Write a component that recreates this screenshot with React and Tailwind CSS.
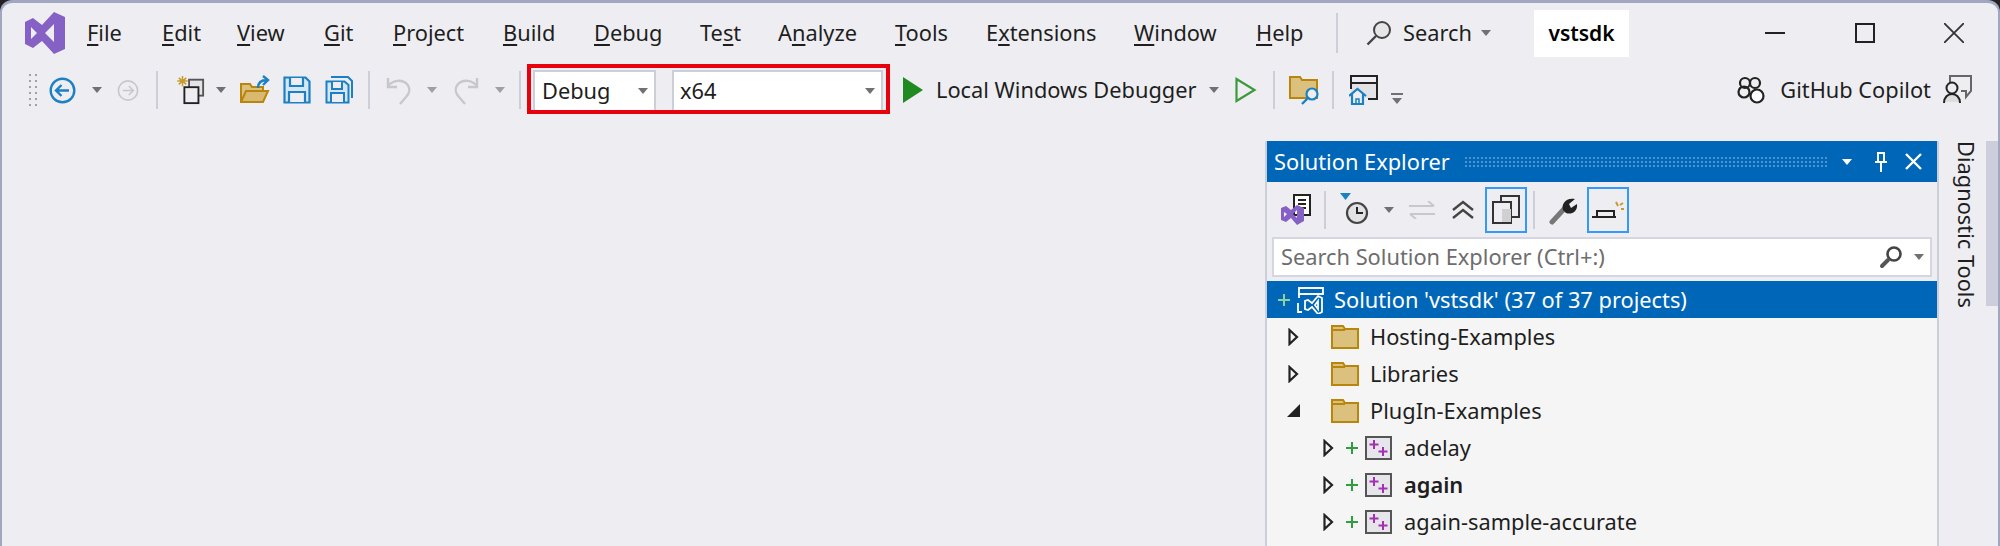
import React from 'react';

const FONT = "font-['Noto_Sans',sans-serif]";

const menus = [
  { pre: '', key: 'F', post: 'ile', w: 'w-[75px]' },
  { pre: '', key: 'E', post: 'dit', w: 'w-[75px]' },
  { pre: '', key: 'V', post: 'iew', w: 'w-[87px]' },
  { pre: '', key: 'G', post: 'it', w: 'w-[69px]' },
  { pre: '', key: 'P', post: 'roject', w: 'w-[110px]' },
  { pre: '', key: 'B', post: 'uild', w: 'w-[91px]' },
  { pre: '', key: 'D', post: 'ebug', w: 'w-[106px]' },
  { pre: 'Te', key: 's', post: 't', w: 'w-[78px]' },
  { pre: 'A', key: 'n', post: 'alyze', w: 'w-[117px]' },
  { pre: '', key: 'T', post: 'ools', w: 'w-[91px]' },
  { pre: 'E', key: 'x', post: 'tensions', w: 'w-[148px]' },
  { pre: '', key: 'W', post: 'indow', w: 'w-[122px]' },
  { pre: '', key: 'H', post: 'elp', w: 'w-[81px]' },
];

function Caret({ color = '#717171' }) {
  return (
    <svg width="10" height="6" viewBox="0 0 10 6">
      <path d="M0 0h10L5 6z" fill={color} />
    </svg>
  );
}

function Sep({ h = 'h-[38px]' }) {
  return <div className={`w-[2px] ${h} bg-[#ccced8]`} />;
}

function Slot({ w, children }) {
  return <div className={`${w} shrink-0 flex items-center justify-center`}>{children}</div>;
}

function VsLogo() {
  return (
    <svg width="40" height="42" viewBox="0 0 40 42">
      <path
        fillRule="evenodd"
        d="M29 0l11 5v32l-11 5-12-13-9 7-8-4V10l8-4 9 7zM6 15v12l6-6zM29 12l-9 9 9 9z"
        fill="#8661c5"
      />
    </svg>
  );
}

function BackIcon() {
  return (
    <svg width="27" height="27" viewBox="0 0 27 27" fill="none" stroke="#1b80c4" strokeWidth="2.4">
      <circle cx="13.5" cy="13.5" r="11.8" />
      <path d="M20 13.5H7.5M12.5 8l-5.5 5.5 5.5 5.5" />
    </svg>
  );
}

function ForwardIcon() {
  return (
    <svg width="27" height="27" viewBox="0 0 27 27" fill="none" stroke="#c8c8cc" strokeWidth="2">
      <circle cx="13.5" cy="13.5" r="11.8" />
      <path d="M7 13.5h12.5M14.5 8l5.5 5.5-5.5 5.5" />
    </svg>
  );
}

function NewProjectIcon() {
  return (
    <svg width="32" height="32" viewBox="0 0 32 32" fill="none">
      <path d="M8 1v11M2.500 6.500h11M4 3l8 7M12 3l-8 7" stroke="#c79a2b" strokeWidth="1.600" />
      <rect x="15" y="5" width="15" height="17" fill="#e4e4e8" stroke="#555" strokeWidth="2" />
      <rect x="10" y="13" width="15" height="17" fill="#eeeef2" stroke="#222" strokeWidth="2" />
    </svg>
  );
}

function OpenIcon() {
  return (
    <svg width="30" height="30" viewBox="0 0 30 30" fill="none">
      <path d="M1 9h9l2 3h11v14H1z" fill="#dcc07e" stroke="#b8860b" strokeWidth="2" />
      <path d="M1 27l5-11h22l-5 11z" fill="#d9b96f" stroke="#b8860b" strokeWidth="2" />
      <path d="M18 13c0-6 4-8 9-8M23 1l5 4-5 5" stroke="#1b80c4" strokeWidth="2.400" />
    </svg>
  );
}

function SaveIcon() {
  return (
    <svg width="28" height="28" viewBox="0 0 28 28" fill="none" stroke="#1b80c4" strokeWidth="2.200">
      <path d="M1.500 1.500h21l4 4v21h-25z" fill="#d6e6f3" />
      <path d="M7 2v8h13V2M6 26V16h16v10" fill="#eeeef2" />
    </svg>
  );
}

function SaveAllIcon() {
  return (
    <svg width="28" height="28" viewBox="0 0 28 28" fill="none" stroke="#1b80c4" strokeWidth="2">
      <path d="M6 1h17l4 4v17" />
      <path d="M1.500 5.500h18l4 3.500v17.500h-22z" fill="#d6e6f3" />
      <path d="M7 6v7h10V6M6 26v-9h13v9" fill="#eeeef2" />
    </svg>
  );
}

function UndoIcon({ flip }) {
  return (
    <svg width="26" height="30" viewBox="0 0 26 30" fill="none" stroke="#c8c8cc" strokeWidth="2.400" className={flip ? '-scale-x-100' : ''}>
      <path d="M2 3v9h9" />
      <path d="M2 11C7 5 16 4 21 9c4 5 2 10-1 13l-6 7" />
    </svg>
  );
}

function PlayFilled() {
  return (
    <svg width="20" height="26" viewBox="0 0 20 26">
      <path d="M0 0l20 13L0 26z" fill="#1f8a1f" />
    </svg>
  );
}

function PlayOutline() {
  return (
    <svg width="22" height="26" viewBox="0 0 22 26" fill="none" stroke="#3c9a3c" strokeWidth="2.200">
      <path d="M1.500 2l18 11-18 11z" />
    </svg>
  );
}

function FolderSearch() {
  return (
    <svg width="32" height="30" viewBox="0 0 32 30" fill="none">
      <path d="M1 2h10l2 3h15v18H1z" fill="#dcc07e" stroke="#b8860b" strokeWidth="2" />
      <circle cx="23" cy="19" r="5.500" fill="#eeeef2" stroke="#1b80c4" strokeWidth="2.200" />
      <path d="M19 23l-6 6" stroke="#1b80c4" strokeWidth="2.400" />
    </svg>
  );
}

function HomeWindow() {
  return (
    <svg width="30" height="32" viewBox="0 0 30 32" fill="none">
      <path d="M2 9h26v15H2z" fill="#e2e2e6" />
      <path d="M2 15V2h26v23h-9M2 9h26" stroke="#222" strokeWidth="2" />
      <path d="M3 21v10h11V21l-5.500-5z" fill="#eeeef2" />
      <path d="M0 22l8.500-7 8.500 7M3 20v10h11V20" stroke="#1b80c4" strokeWidth="2.200" />
      <path d="M7 30v-5h3v5" stroke="#1b80c4" strokeWidth="1.500" />
    </svg>
  );
}

function OverflowCaret() {
  return (
    <div className="flex flex-col items-center gap-[3px] mt-[16px]">
      <div className="w-[12px] h-[2px] bg-[#717171]" />
      <Caret />
    </div>
  );
}

function SearchGlass() {
  return (
    <svg width="26" height="26" viewBox="0 0 26 26" fill="none">
      <circle cx="16" cy="10" r="8" fill="#e6e6e8" stroke="#444" strokeWidth="2" />
      <path d="M10 16L1.500 24.500" stroke="#444" strokeWidth="2.400" />
    </svg>
  );
}

function CopilotIcon() {
  return (
    <svg width="30" height="28" viewBox="0 0 30 28" fill="none" stroke="#222" strokeWidth="2.200">
      <circle cx="8" cy="7" r="5" />
      <circle cx="18" cy="7" r="5" />
      <circle cx="7" cy="16" r="5.500" />
      <circle cx="20" cy="20" r="6.500" fill="#fff" />
    </svg>
  );
}

function FeedbackIcon() {
  return (
    <svg width="30" height="30" viewBox="0 0 30 30" fill="none">
      <path d="M8 8V1h21v15l-5 6v-6h-5" stroke="#666" strokeWidth="2" />
      <path d="M1 27c1-7 5-9 9-9s8 2 9 9z" fill="#ddd" />
      <circle cx="10" cy="13" r="5.500" fill="#eeeef2" stroke="#222" strokeWidth="2" />
      <path d="M2 28c0-6 4-9 8-9s8 3 8 9" stroke="#222" strokeWidth="2" />
    </svg>
  );
}

function ChildFolder() {
  return (
    <svg width="28" height="24" viewBox="0 0 28 24">
      <path d="M1 1h11l2 3h13v19H1z" fill="#dcc07e" stroke="#b8860b" strokeWidth="2" />
      <path d="M1 5h13" stroke="#b8860b" strokeWidth="2" />
    </svg>
  );
}

function ProjectIcon() {
  return (
    <svg width="27" height="24" viewBox="0 0 27 24" fill="none">
      <rect x="1" y="1" width="25" height="22" fill="#e6e6ea" stroke="#555" strokeWidth="2" />
      <path d="M9 4v9M4.500 8.500h9M18 11v9M13.500 15.500h9" stroke="#a42fb5" strokeWidth="2" />
    </svg>
  );
}

function Expander({ open }) {
  if (open) {
    return (
      <svg width="13" height="13" viewBox="0 0 13 13">
        <path d="M13 0v13H0z" fill="#222" />
      </svg>
    );
  }
  return (
    <svg width="11" height="18" viewBox="0 0 11 18" fill="none" stroke="#222" strokeWidth="2.200">
      <path d="M1.500 2l7.500 7-7.500 7z" />
    </svg>
  );
}

function GreenPlus({ color = '#2e9e3e' }) {
  return (
    <svg width="12" height="12" viewBox="0 0 12 12" stroke={color} strokeWidth="2">
      <path d="M6 0v12M0 6h12" />
    </svg>
  );
}

function FolderRow({ label, open }) {
  return (
    <div className="h-[37px] flex items-center text-[#1e1e1e]">
      <div className="w-[24px] ml-[14px] flex justify-center"><Expander open={open} /></div>
      <div className="ml-[26px] mr-[11px] flex"><ChildFolder /></div>
      <span>{label}</span>
    </div>
  );
}

function ProjectRow({ label, bold }) {
  return (
    <div className="h-[37px] flex items-center text-[#1e1e1e]">
      <div className="w-[24px] ml-[49px] flex justify-center"><Expander /></div>
      <div className="ml-[6px] mr-[7px] flex"><GreenPlus /></div>
      <div className="mr-[12px] flex"><ProjectIcon /></div>
      <span className={bold ? 'font-semibold' : ''}>{label}</span>
    </div>
  );
}

export default function App() {
  return (
    <div className={`w-[2000px] h-[546px] overflow-hidden bg-[#222] ${FONT} text-[21.8px] leading-none`}>
      <div className="h-full rounded-t-[12px] border-t-[3px] border-x-[2px] border-[#a3a6c0] bg-[#eeeef2] flex flex-col">
        {/* menu bar */}
        <div className="h-[60px] shrink-0 flex items-center text-[#1e1e1e]">
          <div className="ml-[23px] w-[62px] flex mt-[-1px]"><VsLogo /></div>
          {menus.map((m) => (
            <div key={m.post} className={`${m.w} shrink-0`}>
              {m.pre}<span className="underline underline-offset-[3px]">{m.key}</span>{m.post}
            </div>
          ))}
          <div className="ml-[-1px]"><Sep h="h-[40px]" /></div>
          <div className="ml-[28px] flex"><SearchGlass /></div>
          <span className="ml-[11px] w-[69px]">Search</span>
          <div className="ml-[9px] flex"><Caret /></div>
          <div className="ml-[43px] w-[95px] h-[47px] bg-white flex items-center justify-center font-semibold text-[21px] text-black">vstsdk</div>
          <div className="flex-1" />
          <div className="w-[20px] h-[2px] bg-[#222]" />
          <div className="ml-[70px] w-[20px] h-[20px] border-2 border-[#222]" />
          <svg className="ml-[69px] mr-[34px]" width="20" height="20" viewBox="0 0 20 20" stroke="#333" strokeWidth="1.800">
            <path d="M0 0l20 20M20 0L0 20" />
          </svg>
        </div>

        {/* toolbar */}
        <div className="h-[54px] shrink-0 flex items-center text-[#1e1e1e]">
          <div className="ml-[25px] w-[12px] h-[36px] bg-[radial-gradient(#a0a0a8_1px,transparent_1.2px)] bg-[length:6px_6px]" />
          <div className="w-[9px]" />
          <Slot w="w-[28px]"><BackIcon /></Slot>
          <Slot w="w-[41px]"><Caret /></Slot>
          <Slot w="w-[22px]"><ForwardIcon /></Slot>
          <Slot w="w-[36px]"><Sep /></Slot>
          <Slot w="w-[30px]"><NewProjectIcon /></Slot>
          <Slot w="w-[32px]"><Caret /></Slot>
          <Slot w="w-[36px]"><OpenIcon /></Slot>
          <Slot w="w-[48px]"><SaveIcon /></Slot>
          <Slot w="w-[36px]"><SaveAllIcon /></Slot>
          <Slot w="w-[24px]"><Sep /></Slot>
          <Slot w="w-[36px]"><UndoIcon /></Slot>
          <Slot w="w-[30px]"><Caret color="#a0a0a4" /></Slot>
          <Slot w="w-[38px]"><UndoIcon flip /></Slot>
          <Slot w="w-[30px]"><Caret color="#a0a0a4" /></Slot>
          <Slot w="w-[10px]"><Sep /></Slot>

          {/* highlighted configuration combos */}
          <div className="ml-[2px] mb-[2px] w-[363px] h-[50px] border-[4px] border-[#e8000d] flex items-stretch pl-[2px] pr-[3px] pt-[2px]">
            <div className="w-[123px] bg-white border-x-2 border-t-2 border-[#ccced8] flex items-center pl-[7px] pr-[6px] justify-between">
              <span>Debug</span>
              <Caret />
            </div>
            <div className="ml-[16px] flex-1 bg-white border-x-2 border-t-2 border-[#ccced8] flex items-center pl-[6px] pr-[6px] justify-between">
              <span>x64</span>
              <Caret />
            </div>
          </div>

          <Slot w="w-[46px]"><PlayFilled /></Slot>
          <div className="w-[262px] shrink-0 whitespace-nowrap">Local Windows Debugger</div>
          <Slot w="w-[32px]"><Caret /></Slot>
          <Slot w="w-[32px]"><PlayOutline /></Slot>
          <Slot w="w-[24px]"><Sep /></Slot>
          <Slot w="w-[38px]"><FolderSearch /></Slot>
          <Slot w="w-[18px]"><Sep /></Slot>
          <Slot w="w-[44px]"><HomeWindow /></Slot>
          <Slot w="w-[22px]"><OverflowCaret /></Slot>
          <div className="flex-1" />
          <div className="flex"><CopilotIcon /></div>
          <span className="ml-[13px] whitespace-nowrap">GitHub Copilot</span>
          <div className="ml-[11px] mr-[26px] flex"><FeedbackIcon /></div>
        </div>

        {/* body */}
        <div className="flex-1 min-h-0 flex">
          <div className="flex-1" />

          {/* Solution Explorer */}
          <div className="mt-[24px] w-[674px] shrink-0 border-x-2 border-[#ccced8] bg-[#eeeef2] flex flex-col">
            <div className="h-[41px] shrink-0 bg-[#0066b8] text-white flex items-center pl-[7px]">
              <span>Solution Explorer</span>
              <div className="ml-[14px] flex-1 h-[12px] bg-[radial-gradient(#4d93cf_1px,transparent_1.2px)] bg-[length:4px_4px]" />
              <div className="ml-[14px] flex"><Caret color="#fff" /></div>
              <svg className="ml-[22px]" width="14" height="22" viewBox="0 0 14 22" fill="none" stroke="#fff" strokeWidth="2">
                <path d="M4 2h6v9H4zM1 11h12M7 11v10" />
              </svg>
              <svg className="ml-[17px] mr-[15px]" width="17" height="17" viewBox="0 0 17 17" stroke="#fff" strokeWidth="2.400">
                <path d="M1 1l15 15M16 1L1 16" />
              </svg>
            </div>

            <div className="h-[55px] shrink-0 flex items-center">
              <div className="ml-[13px] flex">
                <svg width="32" height="32" viewBox="0 0 32 32" fill="none">
                  <path d="M14 1h16v20H14z" fill="#fff" stroke="#222" strokeWidth="2" />
                  <path d="M18 6h8M18 10h8M18 14h8" stroke="#222" strokeWidth="2" />
                  <path fillRule="evenodd" d="M17 11l7 3v13l-7 4-6-7-5 4-5-2V14l5-2 5 4zM4 18v5l3-3zM17 16l-4 4 4 4z" fill="#8661c5" />
                </svg>
              </div>
              <div className="ml-[12px]"><Sep h="h-[38px]" /></div>
              <div className="ml-[14px] flex">
                <svg width="30" height="34" viewBox="0 0 30 34" fill="none">
                  <path d="M0 0h11L5.500 7z" fill="#1b80c4" />
                  <circle cx="17" cy="20" r="10" fill="#e2e2e6" stroke="#444" strokeWidth="2.200" />
                  <path d="M17 14v6h6" stroke="#222" strokeWidth="2" />
                </svg>
              </div>
              <div className="ml-[14px] flex"><Caret /></div>
              <div className="ml-[15px] flex">
                <svg width="26" height="18" viewBox="0 0 26 18" fill="none" stroke="#c8c8cc" strokeWidth="2">
                  <path d="M0 5h25M19 0l6 5M26 13H1M7 18l-6-5" />
                </svg>
              </div>
              <div className="ml-[17px] flex">
                <svg width="22" height="20" viewBox="0 0 22 20" fill="none" stroke="#444" strokeWidth="2.400">
                  <path d="M1 10l10-8 10 8M1 18l10-8 10 8" />
                </svg>
              </div>
              <div className="ml-[11px] w-[42px] h-[46px] border-2 border-[#3399ff] flex items-center justify-center">
                <svg width="28" height="30" viewBox="0 0 28 30" fill="none" stroke="#333" strokeWidth="2">
                  <rect x="9" y="1" width="18" height="21" fill="#eeeef2" />
                  <rect x="1" y="7" width="18" height="21" fill="#eeeef2" />
                  <rect x="10" y="14" width="9" height="13" fill="#d0d0d4" stroke="none" />
                </svg>
              </div>
              <div className="ml-[6px]"><Sep h="h-[38px]" /></div>
              <div className="ml-[14px] flex">
                <svg width="30" height="30" viewBox="0 0 30 30" fill="none">
                  <path d="M3 27L16 13" stroke="#777" strokeWidth="5" strokeLinecap="round" />
                  <path d="M14 15c-2-6 3-13 12-11l-6 5 2 4 6-4c1 8-6 11-11 9z" fill="#222" />
                </svg>
              </div>
              <div className="ml-[8px] w-[42px] h-[46px] border-2 border-[#3399ff] flex items-center justify-center">
                <svg width="32" height="22" viewBox="0 0 32 22" fill="none">
                  <path d="M0 18h24M5 18v-6h17v6" stroke="#222" strokeWidth="2" />
                  <path d="M24 3l2 4M29 10h3M28 6l3-2" stroke="#c79a2b" strokeWidth="2" />
                </svg>
              </div>
            </div>

            <div className="mx-[5px] h-[40px] shrink-0 border-2 border-[#d6d6e2] bg-white flex items-center pl-[7px] text-[#6d6d6d]">
              <span className="whitespace-nowrap">Search Solution Explorer (Ctrl+:)</span>
              <div className="flex-1" />
              <svg width="24" height="24" viewBox="0 0 24 24" fill="none">
                <circle cx="15" cy="9" r="6.500" stroke="#444" strokeWidth="2.600" fill="#fff" />
                <path d="M9 15l-6 6" stroke="#555" strokeWidth="4" strokeLinecap="round" />
              </svg>
              <div className="ml-[11px] mr-[6px] flex"><Caret /></div>
            </div>

            <div className="mt-[4px] flex-1 bg-[#f5f5f5]">
              <div className="h-[37px] bg-[#0066b8] text-white flex items-center">
                <div className="ml-[11px] flex"><GreenPlus color="#8fd19e" /></div>
                <div className="ml-[6px] flex">
                  <svg width="28" height="28" viewBox="0 0 28 28" fill="none" stroke="#fff" strokeWidth="1.800">
                    <path d="M3 12V2h24v7M2 8h25M2 17v9h4" />
                    <path fillRule="evenodd" d="M22 10l4 2v14l-4 2-6-7-4 3-3-1v-8l3-1 4 3zM22 15l-3 4 3 4z" />
                  </svg>
                </div>
                <span className="ml-[10px] whitespace-nowrap">Solution 'vstsdk' (37 of 37 projects)</span>
              </div>
              <FolderRow label="Hosting-Examples" />
              <FolderRow label="Libraries" />
              <FolderRow label="PlugIn-Examples" open />
              <ProjectRow label="adelay" />
              <ProjectRow label="again" bold />
              <ProjectRow label="again-sample-accurate" />
            </div>
          </div>

          {/* auto-hidden tool tab */}
          <div className="w-[59px] shrink-0 flex items-start">
            <div className="mt-[24px] ml-[16px] [writing-mode:vertical-rl] text-[#1e1e1e] whitespace-nowrap">Diagnostic Tools</div>
            <div className="flex-1" />
            <div className="mt-[24px] w-[12px] h-[165px] bg-[#cccedb]" />
          </div>
        </div>
      </div>
    </div>
  );
}
